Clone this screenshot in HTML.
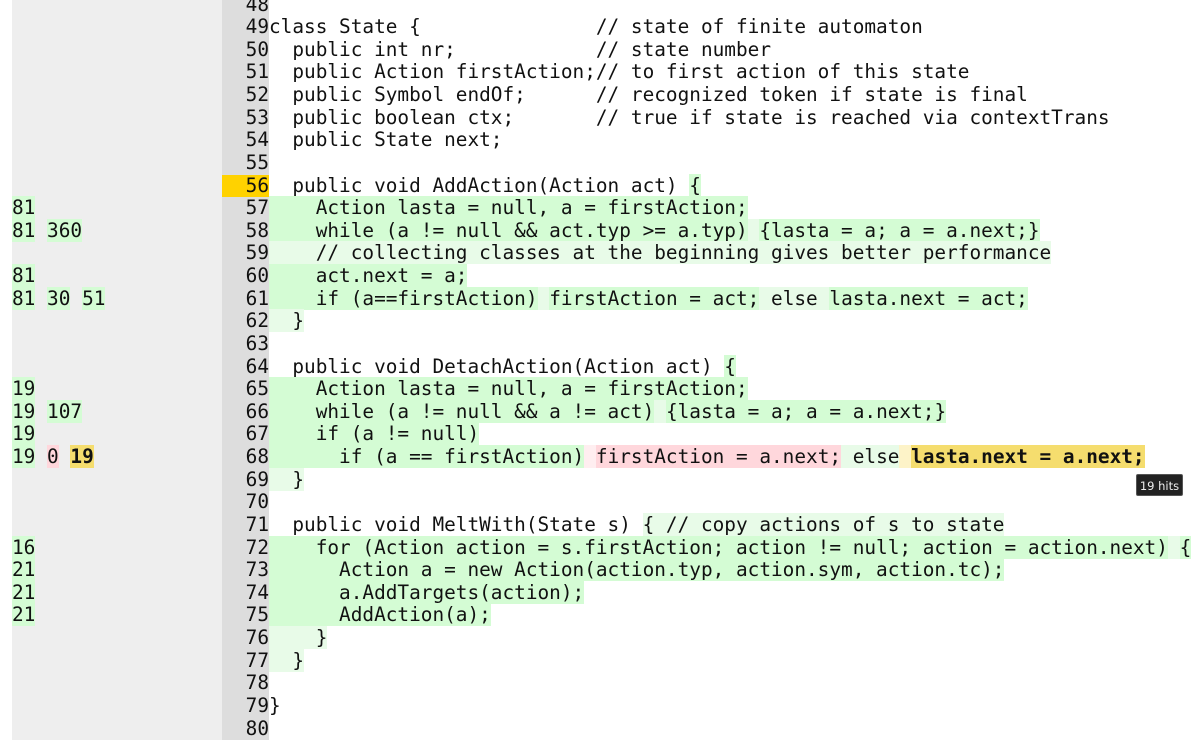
<!DOCTYPE html>
<html><head><meta charset="utf-8"><style>
html,body{margin:0;padding:0;background:#fff;width:1199px;height:730px;overflow:hidden}
#wrap{position:absolute;left:0;top:-6.4px;width:1199px}
.r{display:flex;height:22.63px;line-height:22.63px;font-family:"DejaVu Sans Mono","Liberation Mono",monospace;font-size:19.4px;color:#111;white-space:pre}
.h{margin-left:12px;width:210px;background:#eee;flex:none}
.n{width:47px;background:#ddd;text-align:right;flex:none}
.n.y{background:#ffd200}
.c{flex:1}
.g{background:#d4fcd4}
.p{background:#e8fbe8}
.rd{background:#ffd7dc}
.pr{background:#ffeef0}
.yl{background:#f5dd6e;font-weight:bold}
.py{background:#fdf3c8}
#tip{position:absolute;left:1136px;top:474px;width:47px;height:22px;background:#222;color:#eee;font-family:"DejaVu Sans","Liberation Sans",sans-serif;font-size:11.5px;line-height:22px;text-align:center;border-radius:2px;border:1px solid #555;box-sizing:border-box}
</style></head><body><div id="wrap">
<div class="r"><div class="h"></div><div class="n">48</div><div class="c"></div></div>
<div class="r"><div class="h"></div><div class="n">49</div><div class="c">class State {               // state of finite automaton</div></div>
<div class="r"><div class="h"></div><div class="n">50</div><div class="c">  public int nr;            // state number</div></div>
<div class="r"><div class="h"></div><div class="n">51</div><div class="c">  public Action firstAction;// to first action of this state</div></div>
<div class="r"><div class="h"></div><div class="n">52</div><div class="c">  public Symbol endOf;      // recognized token if state is final</div></div>
<div class="r"><div class="h"></div><div class="n">53</div><div class="c">  public boolean ctx;       // true if state is reached via contextTrans</div></div>
<div class="r"><div class="h"></div><div class="n">54</div><div class="c">  public State next;</div></div>
<div class="r"><div class="h"></div><div class="n">55</div><div class="c"></div></div>
<div class="r"><div class="h"></div><div class="n y">56</div><div class="c">  public void AddAction(Action act) <span class="g">{</span></div></div>
<div class="r"><div class="h"><span class="g">81</span></div><div class="n">57</div><div class="c"><span class="g">    Action lasta = null, a = firstAction;</span></div></div>
<div class="r"><div class="h"><span class="g">81</span> <span class="g">360</span></div><div class="n">58</div><div class="c"><span class="g">    while (a != null &amp;&amp; act.typ &gt;= a.typ)</span><span class="p"> </span><span class="g">{lasta = a; a = a.next;}</span></div></div>
<div class="r"><div class="h"></div><div class="n">59</div><div class="c"><span class="p">    // collecting classes at the beginning gives better performance</span></div></div>
<div class="r"><div class="h"><span class="g">81</span></div><div class="n">60</div><div class="c"><span class="g">    act.next = a;</span></div></div>
<div class="r"><div class="h"><span class="g">81</span> <span class="g">30</span> <span class="g">51</span></div><div class="n">61</div><div class="c"><span class="g">    if (a==firstAction)</span><span class="p"> </span><span class="g">firstAction = act;</span><span class="p"> else </span><span class="g">lasta.next = act;</span></div></div>
<div class="r"><div class="h"></div><div class="n">62</div><div class="c"><span class="p">  }</span></div></div>
<div class="r"><div class="h"></div><div class="n">63</div><div class="c"></div></div>
<div class="r"><div class="h"></div><div class="n">64</div><div class="c">  public void DetachAction(Action act) <span class="g">{</span></div></div>
<div class="r"><div class="h"><span class="g">19</span></div><div class="n">65</div><div class="c"><span class="g">    Action lasta = null, a = firstAction;</span></div></div>
<div class="r"><div class="h"><span class="g">19</span> <span class="g">107</span></div><div class="n">66</div><div class="c"><span class="g">    while (a != null &amp;&amp; a != act)</span><span class="p"> </span><span class="g">{lasta = a; a = a.next;}</span></div></div>
<div class="r"><div class="h"><span class="g">19</span></div><div class="n">67</div><div class="c"><span class="g">    if (a != null)</span></div></div>
<div class="r"><div class="h"><span class="g">19</span> <span class="rd">0</span> <span class="yl">19</span></div><div class="n">68</div><div class="c"><span class="g">      if (a == firstAction)</span><span class="pr"> </span><span class="rd">firstAction = a.next;</span><span class="p"> else</span><span class="py"> </span><span class="yl">lasta.next = a.next;</span></div></div>
<div class="r"><div class="h"></div><div class="n">69</div><div class="c"><span class="p">  }</span></div></div>
<div class="r"><div class="h"></div><div class="n">70</div><div class="c"></div></div>
<div class="r"><div class="h"></div><div class="n">71</div><div class="c">  public void MeltWith(State s) <span class="p">{ // copy actions of s to state</span></div></div>
<div class="r"><div class="h"><span class="g">16</span></div><div class="n">72</div><div class="c"><span class="g">    for (Action action = s.firstAction; action != null; action = action.next)</span><span class="p"> </span><span class="g">{</span></div></div>
<div class="r"><div class="h"><span class="g">21</span></div><div class="n">73</div><div class="c"><span class="g">      Action a = new Action(action.typ, action.sym, action.tc);</span></div></div>
<div class="r"><div class="h"><span class="g">21</span></div><div class="n">74</div><div class="c"><span class="g">      a.AddTargets(action);</span></div></div>
<div class="r"><div class="h"><span class="g">21</span></div><div class="n">75</div><div class="c"><span class="g">      AddAction(a);</span></div></div>
<div class="r"><div class="h"></div><div class="n">76</div><div class="c"><span class="p">    }</span></div></div>
<div class="r"><div class="h"></div><div class="n">77</div><div class="c"><span class="p">  }</span></div></div>
<div class="r"><div class="h"></div><div class="n">78</div><div class="c"></div></div>
<div class="r"><div class="h"></div><div class="n">79</div><div class="c">}</div></div>
<div class="r"><div class="h"></div><div class="n">80</div><div class="c"></div></div>
</div>
<div id="tip">19 hits</div>
</body></html>
